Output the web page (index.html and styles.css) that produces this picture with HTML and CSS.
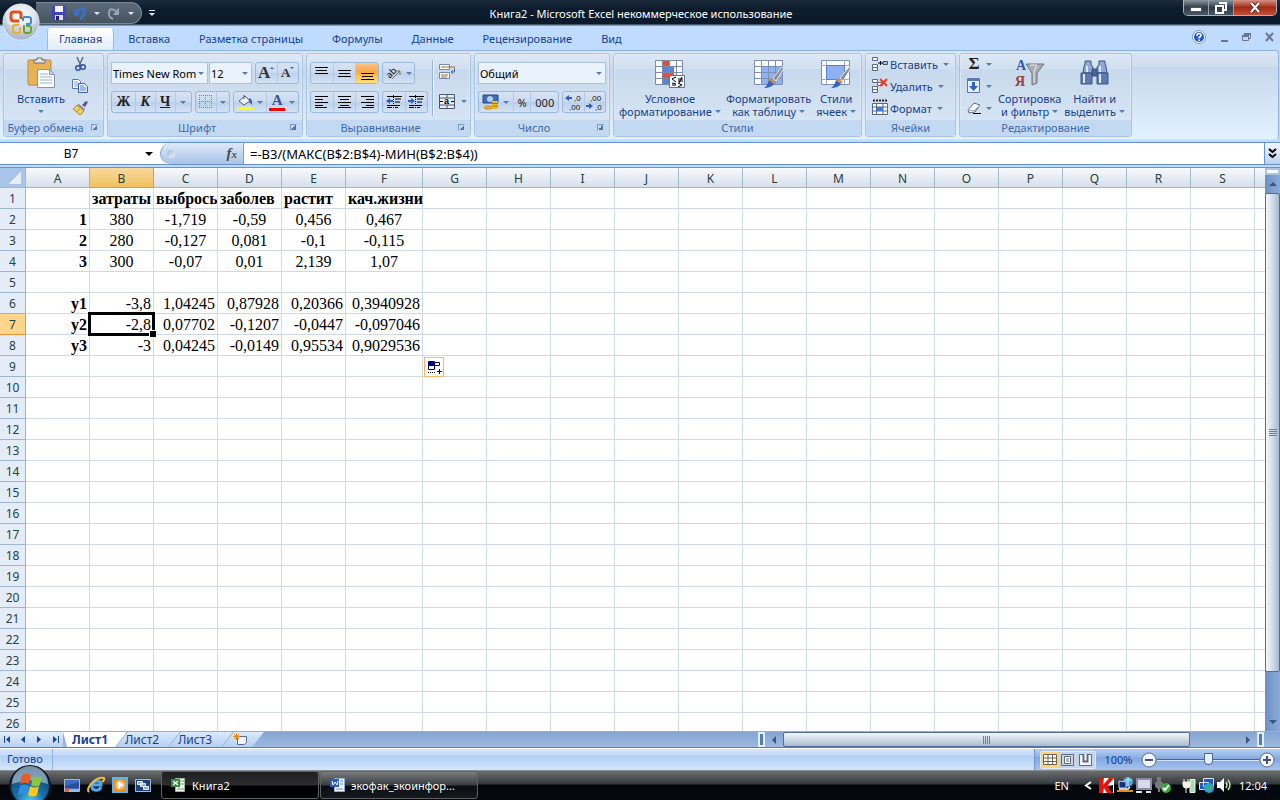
FILE: index.html
```html
<!DOCTYPE html>
<html lang="ru">
<head>
<meta charset="utf-8">
<title>Книга2 - Microsoft Excel</title>
<link rel="stylesheet" href="styles.css">
</head>
<body>

<header class="titlebar">
  <button class="office" aria-label="Office">
    <svg width="38" height="38" viewBox="0 0 38 38">
      <defs>
        <radialGradient id="orb" cx=".5" cy=".35" r=".65"><stop offset="0" stop-color="#fff"/><stop offset=".6" stop-color="#dfe5ee"/><stop offset="1" stop-color="#8f9db3"/></radialGradient>
      </defs>
      <circle cx="19" cy="19" r="18" fill="url(#orb)" stroke="#e8eef6"/>
      <path d="M2 20q17 7 34 0a17 17 0 0 1-34 0z" fill="#b9c4d4" opacity=".55"/>
      <g fill="none" stroke-linejoin="round">
        <path d="M17 18h-5q-3 0-3-3v-4q0-2 3-2h5q2 0 2 2v5" stroke="#e2501c" stroke-width="3"/>
        <path d="M21 18v-2q0-2 2-2h3q3 0 3 2v3q0 2-2 2h-3" stroke="#3c8bd4" stroke-width="2"/>
        <path d="M17 22h-4q-2 0-2 2v3q0 3 3 3h2q2 0 2-2v-4" stroke="#f2ae1c" stroke-width="2"/>
        <path d="M22 22v6q0 2 2 2h3q2 0 2-3v-2q0-2-2-2h-3" stroke="#69a535" stroke-width="2"/>
      </g>
    </svg>
  </button>
  <div class="quick">
    <button aria-label="Сохранить"><svg width="14" height="14" viewBox="0 0 14 14"><path d="M0 0h14v14H1l-1-1z" fill="#4543b8"/><path d="M3 0h8v6H3z" fill="#f1f4fb"/><path d="M3 9h8v5H3z" fill="#dce0ee"/><path d="M4 10h3v4H4z" fill="#232169"/></svg></button>
    <button aria-label="Отменить"><svg width="14" height="14" viewBox="0 0 14 14"><path d="M4 5q6-5 7 0t-4 8" fill="none" stroke="#3c6fc6" stroke-width="3"/><path d="M0 2l1 8 7-2z" fill="#3c6fc6"/></svg></button>
    <i class="arrow light"></i>
    <button aria-label="Вернуть"><svg width="14" height="14" viewBox="0 0 14 14"><path d="M9 5q-6-4-7 1t4 7" fill="none" stroke="#97a3b0" stroke-width="2"/><path d="M12 1v8H6z" fill="#97a3b0"/></svg></button>
    <i class="arrow light"></i>
  </div>
  <button class="quick-more" aria-label="Настройка"><i class="bar"></i><i class="arrow light"></i></button>
  <h1>Книга2 - Microsoft Excel некоммерческое использование</h1>
  <div class="winbtns">
    <button aria-label="Свернуть"><svg width="12" height="8" viewBox="0 0 12 8"><rect x=".5" y="3.500" width="11" height="4" fill="#fff" stroke="#555"/></svg></button>
    <button aria-label="Развернуть"><svg width="12" height="12" viewBox="0 0 12 12"><path d="M4 1h7v7H9M1 4h7v7H1z" fill="none" stroke="#fff" stroke-width="2"/><path d="M3 6h3v3H3z" fill="#444"/></svg></button>
    <button class="close" aria-label="Закрыть"><svg width="12" height="11" viewBox="0 0 12 11"><path d="M2 1l8 9M10 1L2 10" stroke="#5a2f2a" stroke-width="4"/><path d="M2 1l8 9M10 1L2 10" stroke="#fff" stroke-width="2"/></svg></button>
  </div>
</header>

<nav class="tabs">
  <a href="#" class="active">Главная</a>
  <a href="#">Вставка</a>
  <a href="#">Разметка страницы</a>
  <a href="#">Формулы</a>
  <a href="#">Данные</a>
  <a href="#">Рецензирование</a>
  <a href="#">Вид</a>
  <div class="docbtns">
    <button aria-label="Справка"><svg width="14" height="14" viewBox="0 0 14 14"><circle cx="7" cy="7" r="6.500" fill="#fff" stroke="#7e97c4"/><circle cx="7" cy="7" r="5" fill="#2158c8"/><path d="M5 6q0-2.500 2-2.500T9 5.500q0 1-2 2v1M7 9.500v1.500" fill="none" stroke="#fff" stroke-width="1.500"/></svg></button>
    <button aria-label="Свернуть окно"><svg width="8" height="10"><path d="M1 8h7v2H1z" fill="#6c7889"/></svg></button>
    <button aria-label="Восстановить окно"><svg width="9" height="8"><path d="M2.500 2V.5h6v5H7M.5 2.500h6v5h-6z" fill="none" stroke="#6c7889"/><path d="M0 2h7v2H0zM2 0h7v2H2z" fill="#6c7889"/></svg></button>
    <button aria-label="Закрыть окно"><svg width="9" height="8"><path d="M1 0l7 8M8 0L1 8" stroke="#6c7889" stroke-width="2"/></svg></button>
  </div>
</nav>

<div class="ribbon">
  <section class="group g-clip">
    <div class="body">
      <button class="big">
        <svg width="30" height="32" viewBox="0 0 30 32"><rect x="2" y="3" width="23" height="25" rx="1" fill="#e8b257" stroke="#b98b3c"/><path d="M8 6V3h3V1h5v2h3v3z" fill="#e8e8ea" stroke="#6b6b70"/><path d="M11.500 12.500h12l5 5v13h-17z" fill="#fdfdff" stroke="#8795ad"/><path d="M23.500 12.500v5h5z" fill="#c5d3e8" stroke="#8795ad"/><path d="M14 17h8M14 20h12M14 23h12M14 26h12" stroke="#9fb2d0"/></svg>
        <span>Вставить</span><i class="arrow"></i>
      </button>
      <div class="stack">
        <button aria-label="Вырезать"><svg width="16" height="16" viewBox="0 0 16 16"><path d="M5 1l4 9M11 1L7 10" stroke="#5f6c80" stroke-width="1.500"/><circle cx="6" cy="12" r="2.300" fill="none" stroke="#2c54a8" stroke-width="1.500"/><circle cx="11" cy="11" r="2.300" fill="none" stroke="#2c54a8" stroke-width="1.500"/></svg></button>
        <button aria-label="Копировать"><svg width="16" height="16" viewBox="0 0 16 16"><path d="M.5 1.500h6l2 2v7h-8z" fill="#fff" stroke="#5a79ad"/><path d="M2 4h4M2 6h5M2 8h5" stroke="#7b9bd0"/><path d="M6.500 5.500h6l3 3v6h-9z" fill="#eaf1fc" stroke="#3c64a8"/><path d="M8 8h4M8 10h6M8 12h6" stroke="#5b84c8"/></svg></button>
        <button aria-label="Формат по образцу"><svg width="16" height="16" viewBox="0 0 16 16"><path d="M10 5l4-4 2 1-3 5z" fill="#5b4f9c"/><path d="M7 4l6 5-1 2-7-6z" fill="#8a8fa0"/><path d="M5 5l7 6-4 4-7-6q2-1 4-4z" fill="#f2cf63" stroke="#b58c2b"/><path d="M4 12l4-3" stroke="#b58c2b"/></svg></button>
      </div>
    </div>
    <h2>Буфер обмена<i class="launch"></i></h2>
  </section>

  <section class="group g-font">
    <div class="body rows">
      <div class="row">
        <span class="combo"><select class="font-name" aria-label="Шрифт"><option>Times New Rom</option></select><select class="font-size" aria-label="Размер"><option>12</option></select></span>
        <div class="btns grow"><button class="serif big-a" aria-label="Увеличить размер">A<i class="mark up"></i></button><button class="serif small-a" aria-label="Уменьшить размер">A<i class="mark down"></i></button></div>
      </div>
      <div class="row">
        <div class="btns w81"><button class="serif">Ж</button><button class="serif italic">К</button><button class="serif under">Ч</button><button aria-label="Вид подчеркивания"><i class="arrow"></i></button></div>
        <div class="btns w35"><button aria-label="Границы"><svg width="14" height="14" viewBox="0 0 14 14"><path d="M0 .5h13M0 6.500h13M0 12.500h13M.5 0v13M6.500 0v13M12.500 0v13" stroke="#7b7f88" stroke-dasharray="1 1"/></svg></button><button aria-label="Вид границ"><i class="arrow"></i></button></div>
        <div class="btns grow"><button aria-label="Цвет заливки"><svg width="16" height="16" viewBox="0 0 16 16"><path d="M2 7l6-5 5 5-6 4z" fill="#eef2f8" stroke="#50617c"/><path d="M7 5V1" stroke="#50617c"/><path d="M12 4q4 1 3 7l-3-3z" fill="#3868b6"/><path d="M0 13h16v3H0z" fill="#ff0"/></svg><i class="arrow"></i></button><button aria-label="Цвет текста"><span class="serif ink">A</span><i class="arrow"></i></button></div>
      </div>
    </div>
    <h2>Шрифт<i class="launch"></i></h2>
  </section>

  <section class="group g-align">
    <div class="body">
      <div class="rows">
        <div class="row">
          <div class="btns w69"><button aria-label="По верхнему краю"><svg width="15" height="16"><path d="M1 2.500h13M2 5.500h11M1 8.500h13" stroke="#000"/></svg></button><button aria-label="По середине"><svg width="15" height="16"><path d="M1 5.500h13M2 8.500h11M1 11.500h13" stroke="#000"/></svg></button><button class="on" aria-label="По нижнему краю"><svg width="15" height="16"><path d="M1 8.500h13M2 11.500h11M1 14.500h13" stroke="#000"/></svg></button></div>
          <div class="btns w33"><button aria-label="Ориентация"><svg width="16" height="16" viewBox="0 0 16 16"><text class="orient" transform="rotate(-45 8 8)" x="1" y="9">ab</text><path d="M6 14l8-8M14 10V6h-4" fill="none" stroke="#6a6a6a"/></svg><i class="arrow"></i></button></div>
        </div>
        <div class="row">
          <div class="btns w69"><button aria-label="По левому краю"><svg width="15" height="14"><path d="M1 1.500h13M1 4.500h8M1 7.500h13M1 10.500h8M1 12.500h12" stroke="#000"/></svg></button><button aria-label="По центру"><svg width="15" height="14"><path d="M1 1.500h13M3 4.500h9M1 7.500h13M3 10.500h9M1 12.500h13" stroke="#000"/></svg></button><button aria-label="По правому краю"><svg width="15" height="14"><path d="M1 1.500h13M6 4.500h8M1 7.500h13M6 10.500h8M2 12.500h12" stroke="#000"/></svg></button></div>
          <div class="btns w46"><button aria-label="Уменьшить отступ"><svg width="16" height="14"><path d="M1 1.500h15M9 4h6M9 7h5M1 10.500h13M1 12.500h5M9 12.500h3" stroke="#000"/><path d="M7.500 0v14" stroke="#000" stroke-dasharray="1 1"/><path d="M0 6l4-3v2h3v2H4v2z" fill="#2b62c4"/></svg></button><button aria-label="Увеличить отступ"><svg width="16" height="14"><path d="M1 1.500h15M9 4h6M9 7h5M1 10.500h13M1 12.500h5M9 12.500h3" stroke="#000"/><path d="M7.500 0v14" stroke="#000" stroke-dasharray="1 1"/><path d="M7 6L3 3v2H0v2h3v2z" fill="#2b62c4"/></svg></button></div>
        </div>
      </div>
      <i class="divider"></i>
      <div class="rows plain">
        <button aria-label="Перенос текста"><svg width="17" height="16" viewBox="0 0 17 16"><path d="M.5.5h10v5H.5zM.5 8.500h10v6H.5z" fill="#fff" stroke="#7488a8"/><path d="M2 3h14M2 11h7" stroke="#9c6a35"/><path d="M2 13h6" stroke="#9c6a35"/><path d="M15.500 4v4H13M14 6l-2 2 2 2" fill="none" stroke="#4b6b9e"/></svg></button>
        <button aria-label="Объединить"><svg width="16" height="15" viewBox="0 0 16 15"><path d="M.5.500h15v14H.5zM.5 4h15M.5 11h15M8 0v4M8 11v4" fill="#e9eff8" stroke="#47566f"/><path d="M1 7.500h3M15 7.500h-3" stroke="#000"/><text class="merge" x="5" y="10">a</text></svg><i class="arrow"></i></button>
      </div>
    </div>
    <h2>Выравнивание<i class="launch"></i></h2>
  </section>

  <section class="group g-num">
    <div class="body rows">
      <div class="row"><span class="combo wide"><select aria-label="Числовой формат"><option>Общий</option></select></span></div>
      <div class="row">
        <div class="btns w81"><button class="money" aria-label="Денежный формат"><svg width="16" height="16" viewBox="0 0 16 16"><path d="M0 1h15v8H0z" fill="#3f6db8" stroke="#24498b"/><circle cx="7" cy="5" r="3" fill="#b8cdec"/><path d="M9 7h6v8H9z" fill="#f1b92f"/><path d="M9 9.500h6M9 12h6" stroke="#a97410"/><ellipse cx="5" cy="13.500" rx="4" ry="1.500" fill="#f1b92f" stroke="#b8831a"/></svg><i class="arrow"></i></button><button class="pct">%</button><button class="pct">000</button></div>
        <div class="btns grow"><button class="digits" aria-label="Увеличить разрядность"><svg width="17" height="18" viewBox="0 0 17 18"><text x="9" y="8">,0</text><text x="4" y="17">,00</text><path d="M0 5l4-3v2h3v2H4v2z" fill="#2b62c4"/></svg></button><button class="digits" aria-label="Уменьшить разрядность"><svg width="17" height="18" viewBox="0 0 17 18"><text x="4" y="8">,00</text><text x="9" y="17">,0</text><path d="M7 13l-4-3v2H0v2h3v2z" fill="#2b62c4"/></svg></button></div>
      </div>
    </div>
    <h2>Число<i class="launch"></i></h2>
  </section>

  <section class="group g-style">
    <div class="body">
      <button class="big">
        <svg width="30" height="32" viewBox="0 0 30 32"><path d="M.5 3.500h27v24H.5z" fill="#fff"/><path d="M7 3h7v6H7zM7 15h12v6H7z" fill="#f04a35"/><path d="M7 9h12v6H7zM7 21h7v6H7z" fill="#5585e0"/><path d="M.5 3.500h27v24H.5zM.5 9.500h27M.5 15.500h27M.5 21.500h27M7.500 3v24M14.500 3v24M21.500 3v24" fill="none" stroke="#7b8ba8"/><path d="M14.500 18.500h15v12h-15z" fill="#f7f9fd" stroke="#637694"/><path d="M21 20l-4 2 4 3M17 26l4 1M17 28h4M23 22h5M23 24h5M27 20l-3 6M23 26l4 2-4 2" fill="none" stroke="#000"/></svg>
        <span>Условное<br>форматирование<i class="arrow"></i></span>
      </button>
      <button class="big">
        <svg width="30" height="32" viewBox="0 0 30 32"><path d="M.5 3.500h28v24H.5z" fill="#fff"/><path d="M7 9h21v18H7z" fill="#8db1f2"/><path d="M.5 3.500h28v24H.5zM.5 9.500h28M.5 15.500h28M.5 21.500h28M7.500 3v24M14.500 3v24M21.500 3v24" fill="none" stroke="#7d90b4"/><path d="M19 21l9-11 2 1-8 13z" fill="#8c8f96" stroke="#e4e4e4"/><path d="M17 21l5 4-2 2-5-4z" fill="#c89052"/><path d="M15 23l5 4q-3 4-10 4 4-3 5-8z" fill="#3465b8"/></svg>
        <span>Форматировать<br>как таблицу<i class="arrow"></i></span>
      </button>
      <button class="big">
        <svg width="30" height="32" viewBox="0 0 30 32"><path d="M.5 3.500h28v24H.5z" fill="#fff" stroke="#7d90b4"/><path d="M.5 8.500h28M.5 22.500h28M5.500 3v24M23.500 3v24" stroke="#9caccb"/><path d="M5.500 8.500h18v14h-18z" fill="#8db1f2" stroke="#5680cf"/><path d="M19 21l9-11 2 1-8 13z" fill="#8c8f96" stroke="#e4e4e4"/><path d="M17 21l5 4-2 2-5-4z" fill="#c89052"/><path d="M15 23l5 4q-3 4-10 4 4-3 5-8z" fill="#3465b8"/></svg>
        <span>Стили<br>ячеек<i class="arrow"></i></span>
      </button>
    </div>
    <h2>Стили</h2>
  </section>

  <section class="group g-cells">
    <div class="body stack">
      <button><svg width="16" height="16" viewBox="0 0 16 16"><path d="M.5 1.500h5v3h-5zM.5 8.500h5v3h-5zM.5 11.500h5v3h-5z" fill="#fff" stroke="#57698a"/><path d="M11 5.500h4.500v3H11z" fill="#9cbcf0" stroke="#35568f"/><path d="M6 7h5M8.500 5v4" stroke="#000"/></svg>Вставить<i class="arrow"></i></button>
      <button><svg width="16" height="16" viewBox="0 0 16 16"><path d="M.5 1.500h5v3h-5zM.5 8.500h5v3h-5zM.5 11.500h5v3h-5zM5.500 4.500h5v3h-5z" fill="#fff" stroke="#57698a"/><path d="M8 1l7 7M15 1L8 8" stroke="#ee3a24" stroke-width="2"/></svg>Удалить<i class="arrow"></i></button>
      <button><svg width="16" height="16" viewBox="0 0 16 16"><path d="M1 .5h14" stroke="#222" stroke-dasharray="2 1" stroke-width="2"/><path d="M.5 3.500h15v11H.5zM.5 7h15M.5 11h15M4.500 3v12M11 3v12" fill="#fff" stroke="#57698a"/><path d="M5 7h6v4H5z" fill="#3f78e0"/></svg>Формат<i class="arrow"></i></button>
    </div>
    <h2>Ячейки</h2>
  </section>

  <section class="group g-edit">
    <div class="body">
      <div class="stack">
        <button aria-label="Сумма"><span class="serif sigma">Σ</span><i class="arrow"></i></button>
        <button aria-label="Заполнить"><svg width="14" height="16" viewBox="0 0 14 16"><path d="M.5.5h12v14H.5z" fill="#e6effc" stroke="#5a78ae"/><path d="M1 1h11v2H1z" fill="#5a78ae"/><path d="M5 4h3v4h3l-4.500 5L2 8h3z" fill="#2b62c4"/></svg><i class="arrow"></i></button>
        <button aria-label="Очистить"><svg width="14" height="16" viewBox="0 0 14 16"><path d="M1 10l6-7 6 2-5 7-6 1z" fill="#fbfcfe" stroke="#5f6b80"/><path d="M1 10l6 1 6-6" fill="none" stroke="#9aa5b8"/><path d="M6 13.500h8" stroke="#000"/></svg><i class="arrow"></i></button>
      </div>
      <button class="big">
        <svg class="sort" width="30" height="32" viewBox="0 0 30 32"><path d="M11 7h18l-7 9v10l-5 2V16z" fill="#a9adb4" stroke="#6c7078"/><path d="M15 8h7l-3 7v11" fill="none" stroke="#e8eaee"/><text x="1" y="13" fill="#3058ae">A</text><text x="0" y="29" fill="#a03a34">Я</text></svg>
        <span>Сортировка<br>и фильтр<i class="arrow"></i></span>
      </button>
      <button class="big">
        <svg width="30" height="32" viewBox="0 0 30 32"><g stroke="#3b5281"><path d="M4 10q0-2 1-3V4h6v4l2 2v6H3z" fill="#8fa9d6"/><path d="M17 10l2-2V4h6v3q1 1 1 3l1 6H17z" fill="#8fa9d6"/><path d="M1 16h11v11H1z" fill="#5d7ab2"/><path d="M17 16h11v11H17z" fill="#5d7ab2"/><path d="M12 12h5v7h-5z" fill="#4a6496"/></g><path d="M4 17v9M20 17v9M7 9v6M20 9v6" stroke="#dbe6f8" stroke-width="2"/></svg>
        <span>Найти и<br>выделить<i class="arrow"></i></span>
      </button>
    </div>
    <h2>Редактирование</h2>
  </section>
</div>

<div class="formulabar">
  <input class="namebox" aria-label="Имя" value="B7">
  <i class="name-arrow"></i>
  <div class="fx"><i class="dot"></i><button>f<small>x</small></button></div>
  <input class="formula" aria-label="Формула" value="=-B3/(МАКС(B$2:B$4)-МИН(B$2:B$4))">
  <button class="expand" aria-label="Развернуть строку"><svg width="9" height="11"><path d="M1 1l3.500 3L8 1M1 6l3.500 3L8 6" fill="none" stroke="#000" stroke-width="2"/></svg></button>
</div>

<main class="sheet">
  <div class="grid-wrap"><table class="grid" id="grid"></table></div>
  <div class="vscroll">
    <i class="split"></i>
    <button aria-label="Вверх"><i class="tri up"></i></button>
    <div class="thumb"><i class="grip"></i></div>
    <div class="track"></div>
    <button aria-label="Вниз"><i class="tri down"></i></button>
  </div>
</main>

<div class="sheetbar">
  <div class="sheetnav">
    <button aria-label="Первый лист"><svg width="7" height="7"><path d="M0 0h1v7H0zM6 0v7L2 3.500z" fill="#16479d"/></svg></button>
    <button aria-label="Предыдущий лист"><svg width="7" height="7"><path d="M5 0v7L1 3.500z" fill="#16479d"/></svg></button>
    <button aria-label="Следующий лист"><svg width="7" height="7"><path d="M1 0v7l4-3.500z" fill="#16479d"/></svg></button>
    <button aria-label="Последний лист"><svg width="7" height="7"><path d="M6 0h1v7H6zM1 0v7l4-3.500z" fill="#16479d"/></svg></button>
  </div>
  <div class="sheettabs">
    <button class="tab active">Лист1</button>
    <button class="tab">Лист2</button>
    <button class="tab">Лист3</button>
    <button class="tab new" aria-label="Новый лист"><svg width="15" height="13" viewBox="0 0 15 13"><path d="M4.500 3.500h9v6l-2 2h-7z" fill="#eef4fd" stroke="#5b6f92"/><path d="M3.500 0v7M0 3.500h7M1 1l5 5M6 1L1 6" stroke="#e88b1c"/></svg></button>
  </div>
  <div class="hscroll">
    <i class="split"></i>
    <button aria-label="Влево"><i class="tri left"></i></button>
    <div class="thumb"><i class="grip"></i></div>
    <div class="track"></div>
    <button aria-label="Вправо"><i class="tri right"></i></button>
    <i class="split"></i>
  </div>
</div>

<footer class="statusbar">
  <span class="ready">Готово</span>
  <div class="status-right">
    <div class="views">
      <button class="on" aria-label="Обычный"><svg width="14" height="12"><path d="M.5.500h13v10H.5zM.5 4h13M.5 7.500h13M5 0v11M9.500 0v11" fill="#fff" stroke="#6b6557"/></svg></button>
      <button aria-label="Разметка страницы"><svg width="14" height="12"><path d="M.5.500h12v11H.5z" fill="#cfd5de" stroke="#5f6b7d"/><path d="M3.500 2.500h6v7h-6z" fill="#fff" stroke="#5f6b7d"/><path d="M5 5h3M5 7h3" stroke="#5f6b7d"/></svg></button>
      <button aria-label="Страничный режим"><svg width="14" height="12"><path d="M.5.500h12v11H.5z" fill="#f4f6f9" stroke="#5f6b7d"/><path d="M4.500 0v7.500h4V0" fill="#fff" stroke="#5f6b7d" stroke-width="2"/></svg></button>
    </div>
    <span class="percent">100%</span>
    <button class="round" aria-label="Уменьшить"><svg width="16" height="16"><circle cx="8" cy="8" r="7" fill="#f2f5fa" stroke="#5c6c86"/><path d="M4 8h8" stroke="#46546c" stroke-width="2"/></svg></button>
    <input class="zoom" type="range" min="10" max="190" value="100" aria-label="Масштаб">
    <button class="round" aria-label="Увеличить"><svg width="16" height="16"><circle cx="8" cy="8" r="7" fill="#f2f5fa" stroke="#5c6c86"/><path d="M4 8h8M8 4v8" stroke="#46546c" stroke-width="2"/></svg></button>
  </div>
</footer>

<div class="taskbar">
  <button class="start" aria-label="Пуск">
    <svg width="44" height="40" viewBox="0 0 44 40">
      <defs><radialGradient id="start" cx=".5" cy=".9" r=".9"><stop offset="0" stop-color="#4fd0f5"/><stop offset=".4" stop-color="#1b6fa8"/><stop offset="1" stop-color="#12375c"/></radialGradient></defs>
      <circle cx="22" cy="21" r="20" fill="url(#start)" stroke="#0a1622" stroke-width="2"/>
      <path d="M4 19A18 18 0 0 1 40 19q-18-7-36 0z" fill="#cfdfea" opacity=".55"/>
      <path d="M14 10q5-3 9 0l-2 9q-4-3-9 0z" fill="#ee5a24"/><path d="M25 11q4 3 9 0l-2 9q-5 3-9 0z" fill="#8cc63f"/><path d="M12 21q4-3 9 0l-2 9q-5-3-9 0z" fill="#2f8fe0"/><path d="M22 21q5 3 9 0l-2 9q-5 3-9 0z" fill="#fbc91c"/>
    </svg>
  </button>
  <div class="launchers">
    <button aria-label="Рабочий стол"><svg width="16" height="13"><path d="M.5.500h15v12H.5z" fill="#3c6bc0" stroke="#a9b8cc"/><path d="M1 7l14-4v6H1z" fill="#274f9c"/><path d="M1 10h14v2H1z" fill="#9db4da"/><circle cx="3" cy="11" r="2" fill="#e4572e"/></svg></button>
    <button aria-label="Internet Explorer"><svg width="18" height="16" viewBox="0 0 18 16"><path d="M14 10q-2 4-6 3-4-1-3-5t5-4 4 4H6" fill="none" stroke="#49a8ee" stroke-width="3"/><path d="M2 15Q-1 12 5 6t12-5q1 2-2 4" fill="none" stroke="#f0b93a" stroke-width="2"/></svg></button>
    <button aria-label="Проигрыватель"><svg width="16" height="16"><path d="M1 1h14v14H1z" fill="#f38b1c" stroke="#59b6e6" stroke-width="2"/><circle cx="8" cy="8" r="5" fill="#f9b562"/><path d="M6 4v8l6-4z" fill="#fff"/></svg></button>
    <button aria-label="Переключение окон"><svg width="16" height="13"><path d="M.5.500h15v12H.5z" fill="#1d417c" stroke="#a9b8cc"/><path d="M2.500 2.500h5v3h-5zM5.500 4.500h5v3h-5zM8.500 7.500h5v3h-5z" fill="#8db3e2" stroke="#e6eefa"/></svg></button>
  </div>
  <button class="task active"><svg width="16" height="16"><path d="M4.500 1.500h9v13h-9z" fill="#f0f6ee" stroke="#9cb59a"/><path d="M9 4h4M9 7h4M6 12h7" stroke="#6aa564"/><path d="M0 2h9v8H0z" fill="#2f8b3a"/><path d="M2 4l5 4M7 4L2 8" stroke="#fff" stroke-width="1.500"/></svg>Книга2</button>
  <button class="task"><svg width="16" height="16"><path d="M4.500 1.500h10v13h-10z" fill="#eef3fc" stroke="#8fa8d4"/><path d="M10 4h3M10 7h3M6 12h7" stroke="#6a8fd0"/><path d="M0 2h9v8H0z" fill="#2c5bb5"/><path d="M2 4l1 4 2-3 2 3 1-4" fill="none" stroke="#fff"/></svg>экофак_экоинфор...</button>
  <div class="tray">
    <span class="lang">EN</span>
    <button aria-label="Показать значки"><svg width="8" height="9"><path d="M7 1L2 4.500 7 8" fill="none" stroke="#fff" stroke-width="2"/></svg></button>
    <svg width="15" height="15"><path d="M0 0h15v15H0z" fill="#fff"/><path d="M0 0h15L9 7l5 8H8L5 10l-1 5H0z" fill="#e2150f"/><path d="M5 0l-1 7 6-7z" fill="#fff"/><path d="M9 8l5-1v8l-2-2z" fill="#111"/></svg>
    <svg width="16" height="16"><circle cx="11" cy="5" r="5" fill="#4aa7d8"/><path d="M8 3h7M11 0v9" stroke="#cdeefa"/><path d="M2 4l7 1v6H2z" fill="#16307e" stroke="#c6cfe6"/><path d="M0 14h16" stroke="#e38a1a" stroke-width="2"/><path d="M2 12h9l2-2" stroke="#c6cfe6" fill="none" stroke-width="2"/></svg>
    <svg width="16" height="15"><path d="M1 1h14v10H1z" fill="#d8d8e6" stroke="#8b8ba6" stroke-width="2"/><path d="M0 14h6M10 14h5" stroke="#e6e6e6" stroke-width="2"/></svg>
    <svg width="16" height="16"><path d="M2 0h4v5H2zM0 5h8v5l-3 2v3H3v-3l-3-2z" fill="#77797c"/><circle cx="11" cy="11" r="5" fill="#38a63a"/><path d="M8 11l2 2 4-5" fill="none" stroke="#fff" stroke-width="2"/></svg>
    <svg class="power" width="14" height="15"><path d="M8 1.500h5v13H8z" fill="#a4dcae" stroke="#eef6ee"/><path d="M1 4h7v3q0 3-3 3H4Q1 10 1 7zM2 1v3M6 1v3M4 10v5" fill="#f4f1de" stroke="#f4f1de"/></svg>
    <svg width="15" height="15"><path d="M4.500.500h10v8h-10zM.5 4.500h9v7h-9z" fill="#1d58c4" stroke="#dce6f6"/><circle cx="10" cy="10" r="5" fill="#2aa0d8"/><path d="M8 7l4 1-1 4-3 1z" fill="#46b648"/></svg>
    <svg width="15" height="14"><path d="M0 4h3l4-4v14l-4-4H0z" fill="#fff"/><path d="M9 4q2 3 0 6M11 2q4 5 0 10" fill="none" stroke="#b5e3b4" stroke-width="1.500"/></svg>
    <time>12:04</time>
  </div>
</div>

<script src="grid.js"></script>
</body>
</html>
```
FILE: grid.js
```js
var COLS = "ABCDEFGHIJKLMNOPQRST".split("");
var ROWS = 26;
var selected = { col: "B", row: 7 };

var data = {
  1: ["", "затраты", "выбросы", "заболев", "растит", "кач.жизни"],
  2: ["1", "380", "-1,719", "-0,59", "0,456", "0,467"],
  3: ["2", "280", "-0,127", "0,081", "-0,1", "-0,115"],
  4: ["3", "300", "-0,07", "0,01", "2,139", "1,07"],
  6: ["y1", "-3,8", "1,04245", "0,87928", "0,20366", "0,3940928"],
  7: ["y2", "-2,8", "0,07702", "-0,1207", "-0,0447", "-0,097046"],
  8: ["y3", "-3", "0,04245", "-0,0149", "0,95534", "0,9029536"]
};

function cellClass(row, i) {
  if (i === 0) return "head";
  // long text runs on when the next cell is empty
  if (row === 1) return data[row][i + 1] ? "title" : "title spill";
  return row < 5 ? "center" : "num";
}

var html = '<colgroup><col class="c-row">';
COLS.forEach(function(c) {
  html += '<col class="' + (c === "F" ? "c-wide" : "c-cell") + '">';
});
html += '</colgroup><thead><tr><th class="corner"></th>';
COLS.forEach(function(c) {
  html += '<th' + (c === selected.col ? ' class="sel"' : '') + '>' + c + '</th>';
});
html += '</tr></thead><tbody>';

for (var r = 1; r <= ROWS; r++) {
  html += '<tr><th' + (r === selected.row ? ' class="sel"' : '') + '>' + r + '</th>';
  COLS.forEach(function(c, i) {
    var text = (data[r] && data[r][i]) || "";
    var cls = text ? cellClass(r, i) : "";
    if (c === selected.col && r === selected.row) {
      cls += " cursor";
      text += '<i class="frame"></i>';
    }
    if (c === "G" && r === 9) {
      cls = "has-tag";
      text = '<button class="fill-tag" aria-label="Параметры автозаполнения"><svg width="15" height="15"><path d="M1.500 1.500h6v4h-6z" fill="#000080" stroke="#000080"/><path d="M7.500 2.500h5v3h-5zM1.500 5.500h6v4h-6z" fill="#fff" stroke="#000080"/><path d="M1 12.500h8" stroke="#000" stroke-dasharray="1 1"/><path d="M10 11.500h5M12.500 9v5" stroke="#000"/></svg></button>';
    }
    html += '<td' + (cls ? ' class="' + cls + '"' : '') + '>' + text + '</td>';
  });
  html += '</tr>';
}
document.getElementById("grid").innerHTML = html + '</tbody>';
```
FILE: styles.css
```css
* {box-sizing: border-box;}
html, body {margin: 0; padding: 0;}
body {height: 100vh; display: flex; flex-direction: column; overflow: hidden; background: #bfdbff; font: 11px/13px "Noto Sans", "Open Sans", sans-serif; color: #15428b;}
button, input, select {font: inherit; color: inherit; margin: 0; padding: 0; border: 0; background: none; border-radius: 0;}
button {display: flex; align-items: center; justify-content: center;}
h1, h2 {margin: 0; font-weight: normal; font-size: 11px;}
a {color: inherit; text-decoration: none;}
svg {display: block; flex: none; overflow: visible;}
.arrow {display: block; flex: none; width: 0; height: 0; border: 3px solid transparent; border-top-color: #567db0; border-bottom: 0;}
.arrow.light {border-top-color: #dfe8f2;}

/* title bar */
.titlebar {position: relative; flex: none; height: 26px; display: flex; align-items: center; padding-left: 36px; background: linear-gradient(#1d2c3c 0, #0d1d2e 8px, #0a1a2a 24px, #8597a8 25px); color: #fff;}
.office {position: absolute; left: 2px; top: 3px; z-index: 2;}
.quick {display: flex; align-items: center; gap: 7px; height: 22px; width: 106px; padding-left: 16px; border: 1px solid #7b8896; border-left: 0; border-radius: 0 12px 12px 0; background: linear-gradient(#5d6a79, #465462);}
.quick-more {flex-direction: column; gap: 2px; width: 20px;}
.quick-more .bar {width: 6px; height: 1px; background: #dfe8f2;}
.titlebar h1 {flex: 1; text-align: center; padding-right: 160px;}
.winbtns {position: absolute; right: 3px; top: 0; display: flex; height: 16px; border: 1px solid #a9b3bd; border-top: 0; border-radius: 0 0 5px 5px; overflow: hidden;}
.winbtns button {width: 25px; border-right: 1px solid #9aa4ae; background: linear-gradient(#8c959f, #2d3a48 50%, #4b5866);}
.winbtns .close {width: 42px; border: 0; background: linear-gradient(#d59186, #a52a14 50%, #c4523a);}

/* ribbon tabs */
.tabs {flex: none; height: 24px; display: flex; padding: 2px 6px 0 47px; background: #bfdbff;}
.tabs a {height: 22px; padding: 4px 15px 0 14px; font-size: 11px;}
.tabs .active {margin-bottom: -1px; padding: 3px 11px 0; border: 1px solid #9dbce4; border-top-color: #fff; border-bottom: 0; border-radius: 4px 4px 0 0; background: linear-gradient(#fff, #e2ecf8);}
.docbtns {margin-left: auto; display: flex; align-items: center; gap: 14px; height: 18px;}

/* ribbon */
.ribbon {flex: none; height: 90px; display: flex; gap: 3px; padding: 2px 0 2px 3px; margin: 0 1px 0 0; border: 1px solid #8db2e3; border-left: 0; border-bottom-color: #b5f0f9; border-radius: 0 4px 4px 0; background: linear-gradient(#dbe6f4 0, #cfdded 15px, #c8d8ec 16px, #e0f1ff 86px);}
.group {flex: none; display: flex; flex-direction: column; border: 1px solid #aac4de; border-radius: 3px; box-shadow: inset 0 0 0 1px #e6eef888; background: linear-gradient(#dde8f4, #cfdff0 15px, #c8d9ed 16px, #dbe8f6);}
.group .body {flex: 1; display: flex; padding: 0 3px;}
.group h2 {position: relative; height: 16px; line-height: 16px; text-align: center; color: #3e6aaa; background: #c2d9f1;}
.g-clip {width: 101px;}
.g-font {width: 196px;}
.g-align {width: 165px;}
.g-num {width: 136px;}
.g-style {width: 249px;}
.g-cells {width: 91px;}
.g-edit {width: 173px;}
.g-clip h2, .g-font h2, .g-align h2, .g-num h2 {padding-right: 16px;}
.launch {position: absolute; right: 5px; top: 4px; width: 7px; height: 7px; border: 1px solid #7b9bc4; border-right-color: #c2d9f1; border-bottom-color: #c2d9f1; background: linear-gradient(135deg, transparent 50%, #55779f 50%);}
.big {flex-direction: column; justify-content: flex-start; padding-top: 3px; line-height: 13px;}
.big span {margin-top: 3px; white-space: nowrap;}
.big > .arrow {margin-top: 5px;}
.big span .arrow {display: inline-block; margin: 0 0 3px 3px;}
.g-clip .big {width: 62px;}
.group.g-clip .body {padding-left: 6px;}
.stack {display: flex; flex-direction: column; gap: 6px; padding-top: 2px;}
.stack button {height: 16px; justify-content: flex-start; gap: 2px;}
.g-cells .body.stack {padding: 2px 6px 0;}
.g-cells .stack .arrow {margin-left: 3px;}
.g-edit .stack {width: 32px; padding-left: 4px;}
.g-edit .stack button {gap: 5px;}
.g-style .body {justify-content: space-between; padding: 0 5px;}
.g-edit .body {gap: 3px;}
.rows {display: flex; flex-direction: column; gap: 7px;}
.group .rows {padding-top: 8px;}
.group .rows.plain {gap: 9px;}
.plain button {height: 20px; gap: 6px; justify-content: flex-start;}
.row {display: flex; gap: 3px; height: 22px;}
.divider {width: 1px; height: 56px; margin: 6px 6px 0 4px; background: #94b4d8; box-shadow: 1px 0 #f0f6fc;}
.combo {display: flex; gap: 1px; height: 22px;}
.combo select {height: 22px; padding: 0 1px; border: 1px solid #abc1de; appearance: none; color: #000; background: #eaf2fb url("data:image/svg+xml,%3Csvg xmlns='http://www.w3.org/2000/svg' width='6' height='3'%3E%3Cpath d='M0 0h6L3 3z' fill='%23567db0'/%3E%3C/svg%3E") no-repeat right 3px center;}
.font-name {width: 97px;}
.font-size {width: 43px;}
.combo.wide, .combo.wide select {width: 128px;}
.btns {display: flex; border: 1px solid #9cb8dc; border-radius: 3px; background: linear-gradient(#d6e3f4, #c9d9ee 50%, #bdd0e9 51%, #d3e2f5);}
.btns button {flex: 1 1 auto; border-right: 1px solid #b3c9e6; gap: 4px;}
.btns button:last-child {border-right: 0;}
.btns .on {background: linear-gradient(#fbc58c, #fca345 45%, #fcb545 55%, #fee082);}
.btns.grow {flex: 1;}
.w33 {width: 33px;}
.w35 {width: 35px;}
.w46 {width: 46px;}
.w69 {width: 69px;}
.w81 {width: 81px;}
.serif {font: bold 14px "Liberation Serif", serif; color: #1f1f1f;}
.italic {font-style: italic;}
.under {text-decoration: underline;}
.btns .big-a, .btns .small-a {flex: 1; gap: 0; color: #333;}
.btns .big-a {font-size: 17px;}
.btns .small-a {font-size: 13px;}
.mark {align-self: flex-start; margin-top: 4px; border: 2px solid transparent;}
.mark.up {border-bottom-color: #3564ad; border-top: 0;}
.mark.down {border-top-color: #3564ad; border-bottom: 0;}
.ink {width: 16px; height: 18px; border-bottom: 3px solid #f00; color: #33549b; font-size: 15px; line-height: 15px; text-align: center;}
.stack .sigma {width: 14px; font-size: 17px;}
.orient {font: 9px "Noto Sans", sans-serif;}
.merge {font: bold 9px "Liberation Sans", sans-serif;}
.pct {color: #222;}
.digits text {font: 8px "Liberation Sans", sans-serif; fill: #111;}
.sort text {font: bold 14px "Liberation Serif", serif;}

/* formula bar */
.formulabar {flex: none; display: flex; height: 23px; margin-top: 2px; border: 1px solid #6593cf; border-left: 0; border-right: 0; background: #fff; color: #000; font-size: 13px;}
.namebox {width: 142px; text-align: center; font-size: 12px;}
.name-arrow {align-self: center; border: 4px solid transparent; border-top-color: #000; border-bottom: 0; margin: 0 7px 0 3px;}
.fx {display: flex; justify-content: space-between; align-items: center; width: 84px; padding: 0 6px; border: 1px solid #7f9fc9; border-width: 0 1px; border-radius: 12px 0 0 12px; background: linear-gradient(#dfe9f8, #a9c3e8);}
.fx .dot {width: 8px; height: 8px; border-radius: 4px; background: linear-gradient(135deg, #a4b6d0, #eef3fa);}
.fx button {font: italic bold 15px "Liberation Serif", serif; color: #4c4c4c;}
.fx small {font-size: 11px;}
.formula {flex: 1; min-width: 0; padding-left: 6px;}
.expand {width: 16px; border-left: 1px solid #6593cf; background: linear-gradient(#f4f8fd, #b9d0ee);}

/* sheet */
.sheet {flex: 1; min-height: 0; display: flex; margin-top: 2px; border-top: 1px solid #6593cf;}
.grid-wrap {flex: 1; min-width: 0; overflow: hidden; background: #fff;}
.grid {width: 0; table-layout: fixed; border-collapse: separate; border-spacing: 0; color: #000; font: 16px/18px "Liberation Serif", serif;}
.c-row {width: 26px;}
.c-cell {width: 64px;}
.c-wide {width: 77px;}
.grid th, .grid td {height: 21px; padding: 0 2px; border-right: 1px solid #d0d7e5; border-bottom: 1px solid #d0d7e5; white-space: nowrap; overflow: hidden; text-align: left; vertical-align: bottom;}
.grid th {padding: 0; text-align: center; font: 12px/18px "Noto Sans", sans-serif; color: #27413e; background: #e4ecf7; border-color: #9eb6ce;}
.grid thead th {height: 20px; line-height: 16px; background: linear-gradient(#f8fafc, #d6dfea);}
.grid thead .corner {background: linear-gradient(135deg, transparent 50%, #e4edf8 50%) no-repeat right 4px bottom 3px / 12px 12px #a9c4e9;}
.grid thead .sel {background: linear-gradient(#f9d99f, #f1c15f); border-color: #f29436;}
.grid tbody .sel {background: #ffd58d; border-color: #f29436;}
.grid .head {text-align: right; font-weight: bold;}
.grid .title {font-weight: bold;}
.grid .center {text-align: center;}
.grid .num {text-align: right;}
.grid .spill {overflow: visible;}
.grid .cursor, .grid .has-tag {position: relative; overflow: visible;}
.frame {position: absolute; left: -2px; top: -2px; right: -2px; bottom: -2px; border: 3px solid #000;}
.frame::after {content: ""; position: absolute; right: -4px; bottom: -4px; width: 6px; height: 6px; background: #000; border: 1px solid #fff; border-width: 1px 0 0 1px;}
.fill-tag {position: absolute; left: 1px; top: 1px; width: 20px; height: 20px; border: 1px solid #f9b866; background: #fff;}

.vscroll {flex: none; width: 15px; display: flex; flex-direction: column; background: linear-gradient(90deg, #6d90c4, #8cabd8);}
.vscroll button {height: 18px;}
.vscroll .split {height: 7px; background: #fff; border: 2px solid #a9c4e6;}
.vscroll .thumb {flex: 479;}
.vscroll .track {flex: 41;}
.thumb {display: flex; align-items: center; justify-content: center; border: 1px solid #536e9d; border-radius: 2px; background: linear-gradient(90deg, #f4f7fa, #d3dde8 50%, #a8b9cf);}
.grip {width: 8px; height: 8px; background: repeating-linear-gradient(#6f8098 0 1px, transparent 1px 2px);}
.tri {border: 4px solid transparent;}
.tri.up {border-bottom-color: #3d5480; border-top: 0;}
.tri.down {border-top-color: #3d5480; border-bottom: 0;}
.tri.left {border-right-color: #3d5480; border-left: 0;}
.tri.right {border-left-color: #3d5480; border-right: 0;}

/* sheet tabs */
.sheetbar {flex: none; display: flex; height: 17px; border-top: 1px solid #8fb0dc; border-bottom: 1px solid #567db0; background: linear-gradient(#86a5d2, #9db9e0);}
.sheetnav {display: flex; justify-content: space-around; width: 63px; background: linear-gradient(#e3eefb, #b9d2f2);}
.sheettabs {flex: none; display: flex; width: 695px;}
.tab {width: 64px; margin-right: -11px; padding-right: 12px; font-size: 12px; background: linear-gradient(#dbe9fb, #b5cff2); clip-path: polygon(12px 0, 100% 0, calc(100% - 12px) 100%, 0 100%);}
.tab.active {padding-right: 10px; font-weight: bold; background: #fff; clip-path: polygon(0 0, 100% 0, calc(100% - 12px) 100%, 4px 100%);}
.tab.new {width: 42px; padding-right: 6px;}
.hscroll {flex: 1; display: flex;}
.hscroll .split {width: 7px; border: 2px solid #e3eefb; background: #567db0;}
.hscroll .split:last-child {margin-right: 16px;}
.hscroll button {width: 18px;}
.hscroll .thumb {flex: 407; background: linear-gradient(#f4f7fa, #d3dde8 45%, #a8bccf);}
.hscroll .track {flex: 49;}
.hscroll .grip {background: repeating-linear-gradient(90deg, #6f8098 0 1px, transparent 1px 2px);}

/* status bar */
.statusbar {flex: none; display: flex; height: 22px; border-top: 1px solid #fff; background: linear-gradient(#d7e6fb 0, #c5dafa 6px, #b0cff7 7px, #d5e6fa);}
.ready {width: 53px; padding: 3px 0 0 7px; border-right: 1px solid #8db2e3;}
.status-right {margin-left: auto; display: flex; align-items: center; width: 246px; padding: 0 5px; border-left: 1px solid #6d93cc; background: linear-gradient(#b6cff2 0, #8fb2e6 8px, #82a8e0 9px, #a5c3ee);}
.views {display: flex; height: 18px; border: 1px solid #dfeafa; border-radius: 2px;}
.views button {width: 18px; background: #c3d5ee;}
.views .on {background: #fcd27c;}
.percent {flex: 1; text-align: center; white-space: nowrap;}
.zoom {width: 102px; height: 16px; appearance: none;}
.zoom::-webkit-slider-runnable-track {height: 1px; background: #4b6793; box-shadow: 0 1px #d4e3f7;}
.zoom::-webkit-slider-thumb {appearance: none; width: 9px; height: 12px; margin-top: -6px; border: 1px solid #4b6793; border-radius: 1px 1px 5px 5px; background: #e8f0fb;}

/* taskbar */
.taskbar {flex: none; height: 30px; display: flex; align-items: center; position: relative; padding-left: 64px; background: linear-gradient(#a9a9a9 0, #6b6e70 1px, #35383b 14px, #03070c 15px, #05090f); color: #fff;}
.start {position: absolute; left: 8px; top: -5px; height: 35px; align-items: flex-start; overflow: hidden; z-index: 2;}
.launchers {display: flex; align-items: center; gap: 7px; width: 97px;}
.task {width: 158px; height: 28px; gap: 5px; padding-left: 9px; margin-right: 1px; justify-content: flex-start; border: 1px solid #5e6164; border-radius: 3px; background: linear-gradient(#7a7d80, #3a3d40 13px, #0a0d11 14px, #15191d);}
.task.active {background: linear-gradient(#1d1f21, #2b2d2f 13px, #000 14px);}
.tray {margin-left: auto; display: flex; align-items: center; gap: 3px; padding-right: 13px;}
.lang {margin-right: 11px;}
.tray button {width: 10px; margin-right: 3px;}
.power {margin-left: 8px;}
.tray time {margin-left: 4px;}
```
